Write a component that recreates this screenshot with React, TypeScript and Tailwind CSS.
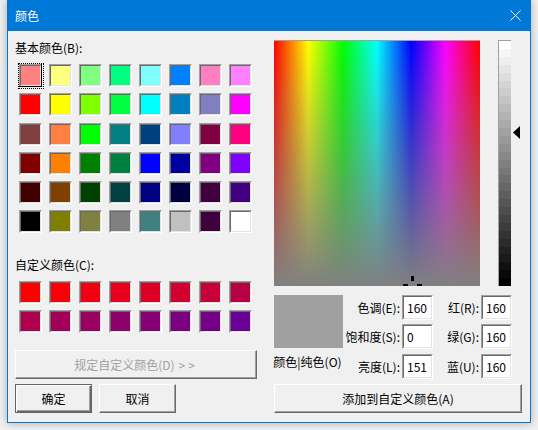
import React from "react";

const basicColors = [
  ["#ff8080", "#ffff80", "#80ff80", "#00ff80", "#80ffff", "#0080ff", "#ff80c0", "#ff80ff"],
  ["#ff0000", "#ffff00", "#80ff00", "#00ff40", "#00ffff", "#0080c0", "#8080c0", "#ff00ff"],
  ["#804040", "#ff8040", "#00ff00", "#008080", "#004080", "#8080ff", "#800040", "#ff0080"],
  ["#800000", "#ff8000", "#008000", "#008040", "#0000ff", "#0000a0", "#800080", "#8000ff"],
  ["#400000", "#804000", "#004000", "#004040", "#000080", "#000040", "#400040", "#400080"],
  ["#000000", "#808000", "#808040", "#808080", "#408080", "#c0c0c0", "#400040", "#ffffff"],
];

const customColors = [
  ["#ff0000", "#fa0006", "#f00010", "#e6001c", "#dd0026", "#d2002f", "#c80038", "#b80044"],
  ["#ae004c", "#a20056", "#9a005f", "#8e006a", "#850074", "#7b007f", "#750088", "#6a0096"],
];

const basicRowGaps = ["", "mt-[6px]", "mt-[7px]", "mt-[6px]", "mt-[6px]", "mt-[6px]"];

function Swatch({ color, selected }: { color: string; selected?: boolean }) {
  return (
    <div className="relative h-[23px] w-[23px] border border-t-[#a0a0a0] border-l-[#a0a0a0] border-b-white border-r-white">
      <div className="h-full w-full border border-t-[#696969] border-l-[#696969] border-b-[#e3e3e3] border-r-[#e3e3e3]">
        <div className="h-full w-full" style={{ backgroundColor: color }} />
      </div>
      {selected ? (
        <>
          <span className="pointer-events-none absolute -top-px -left-px -right-px -bottom-px border-b border-r border-black" />
          <span className="pointer-events-none absolute -top-[2px] -left-[2px] -right-[3px] -bottom-[3px] border border-dotted border-black" />
        </>
      ) : null}
    </div>
  );
}

function Field({ value }: { value: string }) {
  return (
    <div className="h-[25px] w-[31px] border border-t-[#a0a0a0] border-l-[#a0a0a0] border-b-white border-r-white">
      <div className="flex h-full w-full items-center border border-t-[#696969] border-l-[#696969] border-b-[#e3e3e3] border-r-[#e3e3e3] bg-white pl-[3px] text-[12px] leading-none">
        {value}
      </div>
    </div>
  );
}

const raised =
  "flex items-center justify-center border border-t-white border-l-white border-b-[#696969] border-r-[#696969] bg-[#f0f0f0] shadow-[inset_-1px_-1px_0_#a0a0a0] text-[12px] leading-none";

export default function App() {
  const lumSteps = Array.from({ length: 31 }, (_, i) => {
    const v = Math.round(255 - (255 * i) / 30);
    return `rgb(${v},${v},${v})`;
  });

  return (
    <div className="h-[430px] w-[538px] overflow-hidden bg-[#f0f0f0] font-[family-name:'Noto_Sans_CJK_SC','Liberation_Sans',sans-serif] text-black">
      <div className="ml-[7px] flex h-[423px] w-[524px] flex-col border border-t-0 border-[#0078d7] bg-[#f0f0f0] shadow-[0_0_8px_rgba(0,0,0,0.3)]">
        <div className="flex h-[31px] shrink-0 items-center justify-between bg-[#0078d7] pl-[7px] pr-[9px] text-white">
          <span className="text-[12px] leading-none">颜色</span>
          <svg width="11" height="11" viewBox="0 0 11 11">
            <path d="M0.5 0.5L10.5 10.5M10.5 0.5L0.5 10.5" stroke="white" strokeWidth="1" />
          </svg>
        </div>

        <div className="flex flex-1">
          {/* left side */}
          <div className="flex w-[266px] flex-col pl-[7px]">
            <div className="mt-[9px] h-[16px] text-[12px] leading-[16px]">基本颜色(B):</div>
            <div className="mt-[8px] ml-[4px] flex flex-col">
              {basicColors.map((row, r) => (
                <div key={r} className={`flex gap-[7px] ${basicRowGaps[r]}`}>
                  {row.map((c, i) => (
                    <Swatch key={i} color={c} selected={r === 0 && i === 0} />
                  ))}
                </div>
              ))}
            </div>

            <div className="mt-[24px] h-[16px] text-[12px] leading-[16px]">自定义颜色(C):</div>
            <div className="mt-[8px] ml-[4px] flex flex-col gap-[6px]">
              {customColors.map((row, r) => (
                <div key={r} className="flex gap-[7px]">
                  {row.map((c, i) => (
                    <Swatch key={i} color={c} />
                  ))}
                </div>
              ))}
            </div>

            <div className={`${raised} mt-[17px] h-[29px] w-[242px] text-[#a0a0a0]`}>
              规定自定义颜色(D) <span className="ml-[4px] tracking-[3px]">&gt;&gt;</span>
            </div>

            <div className="mt-[5px] flex gap-[7px]">
              <div className="flex h-[29px] w-[77px] items-center justify-center border border-[#646464] bg-[#f0f0f0] text-[12px] leading-none shadow-[inset_1px_1px_0_#fff,inset_-1px_-1px_0_#696969,inset_-2px_-2px_0_#a0a0a0]">
                确定
              </div>
              <div className={`${raised} h-[29px] w-[77px]`}>取消</div>
            </div>
          </div>

          {/* right side */}
          <div className="flex flex-col pt-[9px]">
            <div className="flex">
              <div className="relative h-[246px] w-[206px] overflow-hidden border-t border-[#a0a0a0] bg-[linear-gradient(to_bottom,rgba(128,128,128,0),#808080),linear-gradient(to_right,#ff0000,#ffff00,#00ff00,#00ffff,#0000ff,#ff00ff,#ff0000)]">
                <span className="absolute left-[137px] top-[235px] h-[5px] w-[3px] bg-black" />
                <span className="absolute left-[129px] top-[243px] h-[3px] w-[5px] bg-black" />
                <span className="absolute left-[143px] top-[243px] h-[3px] w-[5px] bg-black" />
              </div>
              <div className="ml-[18px] flex h-[246px] w-[13px] flex-col border-l border-t border-[#a0a0a0]">
                {lumSteps.map((c, i) => (
                  <div key={i} className="flex-1" style={{ backgroundColor: c }} />
                ))}
              </div>
              <svg className="ml-[2px] mt-[86px]" width="7" height="13" viewBox="0 0 7 13">
                <polygon points="7,0 0,6.5 7,13" fill="black" />
              </svg>
            </div>

            <div className="mt-[9px] flex">
              <div className="flex w-[69px] flex-col items-center">
                <div className="h-[53px] w-[69px] bg-[#a0a0a0]" />
                <div className="mt-[6px] -ml-[2px] whitespace-nowrap text-[12px] leading-[16px]">颜色|纯色(O)</div>
              </div>

              <div className="flex flex-col">
                {[
                  ["色调(E):", "160", "红(R):", "160", ""],
                  ["饱和度(S):", "0", "绿(G):", "160", "mt-[4px]"],
                  ["亮度(L):", "151", "蓝(U):", "160", "mt-[5px]"],
                ].map(([l1, v1, l2, v2, gap]) => (
                  <div key={l1} className={`flex items-center ${gap}`}>
                    <div className="w-[57px] whitespace-nowrap text-right text-[12px] leading-none">{l1}</div>
                    <div className="ml-[2px]">
                      <Field value={v1} />
                    </div>
                    <div className="w-[46px] whitespace-nowrap text-right text-[12px] leading-none">{l2}</div>
                    <div className="ml-[2px]">
                      <Field value={v2} />
                    </div>
                  </div>
                ))}
              </div>
            </div>

            <div className={`${raised} mt-[5px] h-[29px] w-[248px]`}>添加到自定义颜色(A)</div>
          </div>
        </div>
      </div>
    </div>
  );
}
